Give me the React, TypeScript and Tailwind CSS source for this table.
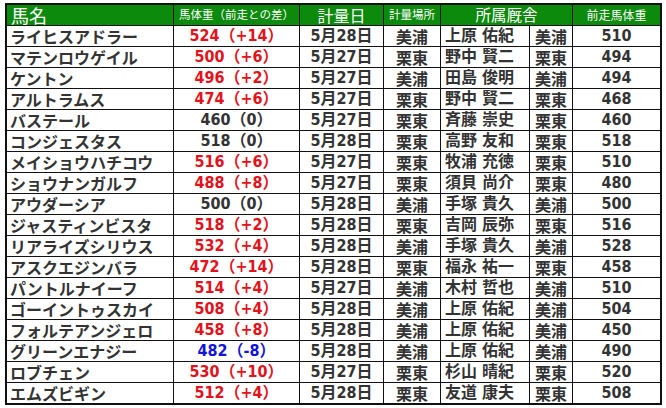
const rows = [
  ["ライヒスアドラー", "524（+14）", "5月28日", "美浦", "上原 佑紀", "美浦", "510", "up"],
  ["マテンロウゲイル", "500（+6）", "5月27日", "栗東", "野中 賢二", "栗東", "494", "up"],
  ["ケントン", "496（+2）", "5月27日", "美浦", "田島 俊明", "美浦", "494", "up"],
  ["アルトラムス", "474（+6）", "5月27日", "栗東", "野中 賢二", "栗東", "468", "up"],
  ["バステール", "460（0）", "5月27日", "栗東", "斉藤 崇史", "栗東", "460", "even"],
  ["コンジェスタス", "518（0）", "5月28日", "栗東", "高野 友和", "栗東", "518", "even"],
  ["メイショウハチコウ", "516（+6）", "5月27日", "栗東", "牧浦 充徳", "栗東", "510", "up"],
  ["ショウナンガルフ", "488（+8）", "5月27日", "栗東", "須貝 尚介", "栗東", "480", "up"],
  ["アウダーシア", "500（0）", "5月28日", "美浦", "手塚 貴久", "美浦", "500", "even"],
  ["ジャスティンビスタ", "518（+2）", "5月28日", "栗東", "吉岡 辰弥", "栗東", "516", "up"],
  ["リアライズシリウス", "532（+4）", "5月28日", "美浦", "手塚 貴久", "美浦", "528", "up"],
  ["アスクエジンバラ", "472（+14）", "5月28日", "栗東", "福永 祐一", "栗東", "458", "up"],
  ["パントルナイーフ", "514（+4）", "5月27日", "美浦", "木村 哲也", "美浦", "510", "up"],
  ["ゴーイントゥスカイ", "508（+4）", "5月28日", "美浦", "上原 佑紀", "美浦", "504", "up"],
  ["フォルテアンジェロ", "458（+8）", "5月28日", "美浦", "上原 佑紀", "美浦", "450", "up"],
  ["グリーンエナジー", "482（-8）", "5月28日", "美浦", "上原 佑紀", "美浦", "490", "down"],
  ["ロブチェン", "530（+10）", "5月27日", "栗東", "杉山 晴紀", "栗東", "520", "up"],
  ["エムズビギン", "512（+4）", "5月28日", "栗東", "友道 康夫", "栗東", "508", "up"],
];

const head = "flex h-[21px] items-center border-[#111] bg-[#0b8a0b] leading-none text-white";

export default function App() {
  return (
    <div className="h-[408px] w-[666px] bg-white pl-[5px] pt-[3px]">
      <div className="grid w-[657px] grid-cols-[167px_126px_84px_57px_89px_43px_87px] border-2 border-[#111] font-['DejaVu_Sans_Condensed','DejaVu_Sans','Noto_Sans_CJK_JP',sans-serif]">
        {/* header */}
        <div className={`${head} border-r border-b pl-[4px] font-['Noto_Sans_CJK_JP',sans-serif] text-[18px]`}>馬名</div>
        <div className={`${head} justify-center border-r border-b font-['Noto_Sans_CJK_JP',sans-serif] text-[11.5px]`}>
          馬体重（前走との差）
        </div>
        <div className={`${head} justify-center border-r border-b font-['Noto_Sans_CJK_JP',sans-serif] text-[16px]`}>計量日</div>
        <div className={`${head} justify-center border-r border-b font-['Noto_Sans_CJK_JP',sans-serif] text-[11.5px]`}>計量場所</div>
        <div className={`${head} col-span-2 justify-center border-r border-b font-['Noto_Sans_CJK_JP',sans-serif] text-[15.5px]`}>
          所属厩舎
        </div>
        <div className={`${head} justify-center border-b font-['Noto_Sans_CJK_JP',sans-serif] text-[12px]`}>前走馬体重</div>

        {rows.map((r, i) => {
          const last = i === rows.length - 1;
          const b = last ? "h-[20px] border-r border-[#111]" : "h-[21px] border-r border-b border-[#111]";
          const bLast = last ? "h-[20px]" : "h-[21px] border-b border-[#111]";
          const color =
            r[7] === "up" ? "text-[#e3121b]" : r[7] === "down" ? "text-[#1414d8]" : "text-[#333]";
          return (
            <div key={i} className="contents text-[16px] font-bold leading-none text-[#333]">
              <div className={`flex items-center pl-[3px] font-['Noto_Sans_CJK_JP',sans-serif] ${b}`}>{r[0]}</div>
              <div className={`flex items-center justify-center ${b} ${color}`}>{r[1]}</div>
              <div className={`flex items-center justify-center ${b}`}>{r[2]}</div>
              <div className={`flex items-center justify-center font-['Noto_Sans_CJK_JP',sans-serif] ${b}`}>{r[3]}</div>
              <div className={`flex items-center pl-[4px] ${b}`}>{r[4]}</div>
              <div className={`flex items-center justify-center font-['Noto_Sans_CJK_JP',sans-serif] ${b}`}>{r[5]}</div>
              <div className={`flex items-center justify-center ${bLast}`}>{r[6]}</div>
            </div>
          );
        })}
      </div>
    </div>
  );
}
